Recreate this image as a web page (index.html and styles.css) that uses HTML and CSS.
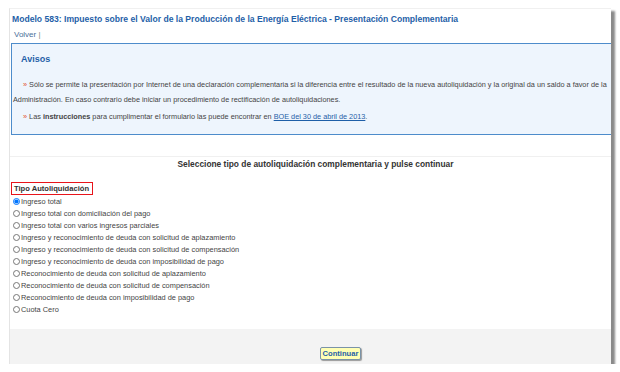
FILE: index.html
```html
<!DOCTYPE html>
<html lang="es">
  <head>
    <meta charset="UTF-8" />
    <meta name="viewport" content="width=device-width, initial-scale=1.0" />
    <title>Modelo 583</title>
    <link rel="stylesheet" href="styles.css">
  </head>
  <body>
    <div class="frame">
      <h1 class="page-title">Modelo 583: Impuesto sobre el Valor de la Producción de la Energía Eléctrica - Presentación Complementaria</h1>
      <div class="nav"><a href="#">Volver</a> <span class="sep">|</span></div>

      <!-- Avisos -->
      <div class="avisos">
        <h2>Avisos</h2>
        <p class="aviso aviso-first">Sólo se permite la presentación por Internet de una declaración complementaria si la diferencia entre el resultado de la nueva autoliquidación y la original da un saldo a favor de la Administración. En caso contrario debe iniciar un procedimiento de rectificación de autoliquidaciones.</p>
        <p class="aviso aviso-second">Las <b>instrucciones</b> para cumplimentar el formulario las puede encontrar en <a href="#">BOE del 30 de abril de 2013</a>.</p>
      </div>

      <!-- Formulario -->
      <div class="form-box">
        <h3 class="form-title">Seleccione tipo de autoliquidación complementaria y pulse continuar</h3>
        <div class="tipo-label">Tipo Autoliquidación</div>
        <div class="options">
          <label><input type="radio" name="tipo" checked>Ingreso total</label>
          <label><input type="radio" name="tipo">Ingreso total con domiciliación del pago</label>
          <label><input type="radio" name="tipo">Ingreso total con varios ingresos parciales</label>
          <label><input type="radio" name="tipo">Ingreso y reconocimiento de deuda con solicitud de aplazamiento</label>
          <label><input type="radio" name="tipo">Ingreso y reconocimiento de deuda con solicitud de compensación</label>
          <label><input type="radio" name="tipo">Ingreso y reconocimiento de deuda con imposibilidad de pago</label>
          <label><input type="radio" name="tipo">Reconocimiento de deuda con solicitud de aplazamiento</label>
          <label><input type="radio" name="tipo">Reconocimiento de deuda con solicitud de compensación</label>
          <label><input type="radio" name="tipo">Reconocimiento de deuda con imposibilidad de pago</label>
          <label><input type="radio" name="tipo">Cuota Cero</label>
        </div>
      </div>

      <div class="footer">
        <button class="btn-continuar">Continuar</button>
      </div>
    </div>
  </body>
</html>
```

FILE: styles.css
```css
/* página */
body {
  margin: 0;
  background: #fff;
  font-family: "Liberation Sans", Arial, sans-serif;
}

/* marco con sombra */
.frame {
  margin: 8px 0 0 9px;
  width: 601px;
  height: 355px;
  background: #fff;
  border-left: 1px solid #e4e4e4;
  border-top: 1px solid #f0f0f0;
  box-shadow: 4px 3px 2px #8a8a8a;
  display: flex;
  flex-direction: column;
  overflow: hidden;
}

.page-title {
  margin: 0;
  padding: 5px 0 0 2px;
  font-size: 8.6px;
  font-weight: bold;
  color: #1f5fa8;
  white-space: nowrap;
}

.nav {
  padding: 6px 0 0 4px;
  height: 11px;
  font-size: 8px;
}

.nav a {
  color: #4a6f99;
  text-decoration: none;
}

.nav .sep {
  color: #888;
}

/* caja de avisos */
.avisos {
  margin: 2px 0 0 1px;
  border: 1px solid #4d8ccb;
  border-right: none;
  background: #eef5fd;
  height: 90px;
  padding: 0 0 0 1px;
  font-size: 7.3px;
  color: #444;
  flex-shrink: 0;
}

.avisos h2 {
  margin: 10px 0 0 0;
  padding-left: 8px;
  font-size: 9px;
  color: #1f5fa8;
}

.aviso {
  margin: 0;
  line-height: 15px;
  text-indent: 10px;
}

.aviso::before {
  content: "\00BB\00A0";
  color: #e2502e;
}

.aviso-first {
  padding-top: 13px;
}

.aviso-second {
  padding-top: 2px;
}

.avisos a {
  color: #1f5fa8;
}

/* formulario */
.form-box {
  margin-top: 21px;
  border-top: 1px solid #f0f0f0;
  flex: 1;
  font-size: 7.4px;
  color: #444;
}

.form-title {
  margin: 0;
  padding: 2px 0 0 10px;
  text-align: center;
  font-size: 8.4px;
  color: #333;
}

.tipo-label {
  display: inline-block;
  margin: 13px 0 0 1px;
  padding: 1px 3px 1px 2px;
  border: 1px solid #e8141b;
  font-weight: bold;
  font-size: 7.6px;
  color: #333;
}

.options {
  display: flex;
  flex-direction: column;
  padding-left: 3px;
}

.options label {
  display: flex;
  align-items: center;
  height: 12px;
}

.options input {
  margin: 0 1px 0 0;
  width: 7px;
  height: 7px;
}

/* pie con botón */
.footer {
  height: 31px;
  background: #f3f3f3;
  display: flex;
  justify-content: center;
  align-items: flex-end;
  padding-bottom: 4px;
  flex-shrink: 0;
}

.btn-continuar {
  margin-left: 60px;
  padding: 1px 2px;
  background: #ffffb4;
  border: 1px solid #7a93a8;
  border-radius: 2px;
  box-shadow: 1px 1px 1px #999;
  font-family: "Liberation Sans", Arial, sans-serif;
  font-size: 7.6px;
  font-weight: bold;
  color: #1f5fa8;
}
```
